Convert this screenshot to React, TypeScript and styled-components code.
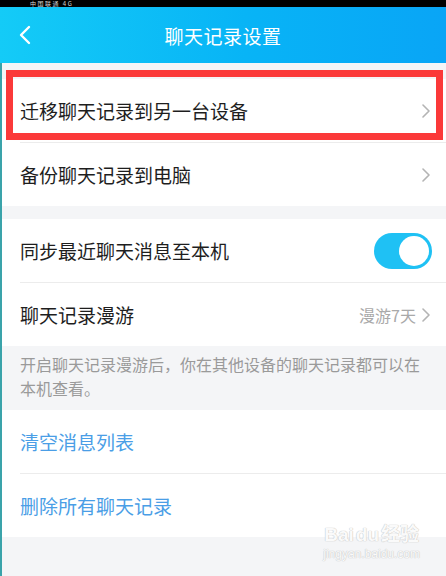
import styled, { createGlobalStyle } from 'styled-components';

const GlobalStyle = createGlobalStyle`
  html, body {
    margin: 0;
    padding: 0;
    background: #f4f5f7;
  }
  body {
    font-family: "Noto Sans CJK SC", "Noto Sans", sans-serif;
  }
`;

interface Row {
  label: string;
  kind: 'link' | 'toggle' | 'value' | 'action';
  value?: string;
  marked?: boolean;
}

const topRows: Row[] = [
  { label: '迁移聊天记录到另一台设备', kind: 'link', marked: true },
  { label: '备份聊天记录到电脑', kind: 'link' },
];

const syncRows: Row[] = [
  { label: '同步最近聊天消息至本机', kind: 'toggle' },
  { label: '聊天记录漫游', kind: 'value', value: '漫游7天' },
];

const actionRows: Row[] = [
  { label: '清空消息列表', kind: 'action' },
  { label: '删除所有聊天记录', kind: 'action' },
];

function Chevron() {
  return (
    <svg width="8" height="14" viewBox="0 0 8 14">
      <polyline
        points="1,1 7,7 1,13"
        fill="none"
        stroke="#b4b4b4"
        strokeWidth="1.6"
        strokeLinecap="round"
        strokeLinejoin="round"
      />
    </svg>
  );
}

function SettingRow({ row }: { row: Row }) {
  return (
    <StyledRow>
      <RowLabel $action={row.kind === 'action'}>{row.label}</RowLabel>
      {row.kind === 'link' && <Chevron />}
      {row.kind === 'value' && (
        <RowValue>
          <span>{row.value}</span>
          <Chevron />
        </RowValue>
      )}
      {row.kind === 'toggle' && (
        <Toggle aria-label={row.label} type="button">
          <Knob />
        </Toggle>
      )}
      {row.marked && <Marker />}
    </StyledRow>
  );
}

function Section({ rows }: { rows: Row[] }) {
  return (
    <StyledSection>
      {rows.map((row) => (
        <SettingRow key={row.label} row={row} />
      ))}
    </StyledSection>
  );
}

function App() {
  return (
    <>
      <GlobalStyle />
      <Page>
        <StatusBar>
          <span>中国联通 4G</span>
        </StatusBar>
        <Header>
          <BackButton aria-label="返回" type="button">
            <svg width="14" height="20" viewBox="0 0 14 20">
              <polyline
                points="11,2 3,10 11,18"
                fill="none"
                stroke="#ffffff"
                strokeWidth="2.4"
                strokeLinecap="round"
                strokeLinejoin="round"
              />
            </svg>
          </BackButton>
          <Title>聊天记录设置</Title>
        </Header>
        <Body>
          <Section rows={topRows} />
          <Section rows={syncRows} />
          <Note>
            开启聊天记录漫游后，你在其他设备的聊天记录都可以在本机查看。
          </Note>
          <Section rows={actionRows} />
          <Watermark>
            <strong>
              Bai<em>du</em>经验
            </strong>
            <small>jingyan.baidu.com</small>
          </Watermark>
        </Body>
      </Page>
    </>
  );
}

export default App;

const Page = styled.div`
  display: flex;
  flex-direction: column;
  width: 446px;
  height: 576px;
  overflow: hidden;
  background: #f4f5f7;
`;

const StatusBar = styled.div`
  height: 7px;
  background: #000;
  overflow: hidden;

  & > span {
    display: block;
    padding-left: 30px;
    color: #d8d8d8;
    font-size: 6px;
    line-height: 7px;
    letter-spacing: 1.5px;
  }
`;

const Header = styled.header`
  position: relative;
  display: flex;
  align-items: center;
  justify-content: center;
  height: 56px;
  background: linear-gradient(90deg, #14cbf7 0%, #08b4f6 55%, #09a5f6 100%);
`;

const BackButton = styled.button`
  position: absolute;
  left: 18px;
  top: 18px;
  display: flex;
  padding: 0;
  border: none;
  background: transparent;
`;

const Title = styled.h1`
  margin: 0;
  color: #fff;
  font-size: 19px;
  font-weight: 400;
  letter-spacing: 0.5px;
`;

const Body = styled.main`
  position: relative;
  flex: 1;
  display: flex;
  flex-direction: column;
  gap: 13px;
  padding-top: 16px;
  border-left: 2px solid #3aa3aa;
`;

const StyledSection = styled.section`
  display: flex;
  flex-direction: column;
  background: #fff;
`;

const StyledRow = styled.div`
  position: relative;
  display: flex;
  align-items: center;
  justify-content: space-between;
  height: 63px;
  margin-left: 18px;
  padding-right: 16px;

  & + & {
    border-top: 1px solid #ececec;
  }
`;

const RowLabel = styled.span<{ $action: boolean }>`
  color: ${({ $action }) => ($action ? '#4a9ee6' : '#1e1e1e')};
  font-size: 19px;
`;

const RowValue = styled.div`
  display: flex;
  align-items: center;
  gap: 6px;
  color: #a9a9a9;
  font-size: 16px;
`;

const Toggle = styled.button`
  display: flex;
  align-items: center;
  justify-content: flex-end;
  width: 58px;
  height: 36px;
  margin-right: -2px;
  padding: 0 3px;
  border: none;
  border-radius: 18px;
  background: #1fc1f4;
`;

const Knob = styled.span`
  width: 30px;
  height: 30px;
  border-radius: 50%;
  background: #fff;
`;

const Marker = styled.span`
  position: absolute;
  top: -9px;
  left: -14px;
  right: 3px;
  height: 70px;
  box-sizing: border-box;
  border: 7px solid #fb3939;
`;

const Note = styled.p`
  margin: -7px 0 -3px;
  padding: 0 14px 0 18px;
  color: #9a9a9a;
  font-size: 16px;
  line-height: 24px;
`;

const Watermark = styled.div`
  position: absolute;
  right: 26px;
  bottom: 14px;
  display: flex;
  flex-direction: column;
  align-items: center;
  font-family: "Liberation Sans", "Noto Sans CJK SC", sans-serif;
  color: #fafafa;
  text-shadow: 0 0 1px #c4c4c4, 0 0 1px #c4c4c4;

  & > strong {
    font-size: 19px;
    line-height: 22px;
    font-weight: 700;
  }

  & em {
    font-style: normal;
    margin: 0 2px;
  }

  & > small {
    font-size: 12px;
    line-height: 16px;
  }
`;
